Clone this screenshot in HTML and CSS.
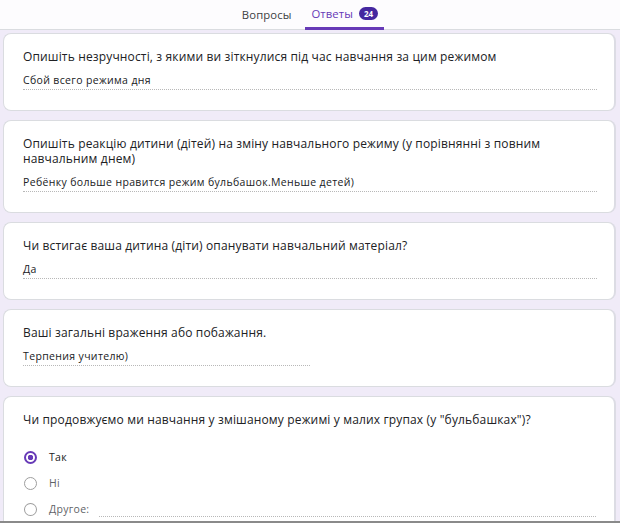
FILE: index.html
```html
<!DOCTYPE html>
<html lang="uk">
<head>
<meta charset="utf-8">
<link rel="stylesheet" href="styles.css">
</head>
<body>
<header class="tabs">
  <div class="tab">Вопросы</div>
  <div class="tab active">Ответы <span class="badge">24</span></div>
</header>
<main class="list">
  <section class="card">
    <div class="q">Опишіть незручності, з якими ви зіткнулися під час навчання за цим режимом</div>
    <div class="a full">Сбой всего режима дня</div>
  </section>
  <section class="card">
    <div class="q">Опишіть реакцію дитини (дітей) на зміну навчального режиму (у порівнянні з повним навчальним днем)</div>
    <div class="a full">Ребёнку больше нравится режим бульбашок.Меньше детей)</div>
  </section>
  <section class="card">
    <div class="q">Чи встигає ваша дитина (діти) опанувати навчальний матеріал?</div>
    <div class="a full">Да</div>
  </section>
  <section class="card">
    <div class="q">Ваші загальні враження або побажання.</div>
    <div class="a short">Терпения учителю)</div>
  </section>
  <section class="card last">
    <div class="q">Чи продовжуємо ми навчання у змішаному режимі у малих групах (у "бульбашках")?</div>
    <div class="options">
      <div class="opt"><span class="radio on"></span><span class="lbl dark">Так</span></div>
      <div class="opt"><span class="radio"></span><span class="lbl">Ні</span></div>
      <div class="opt"><span class="radio"></span><span class="lbl">Другое:</span><span class="other"></span></div>
    </div>
  </section>
</main>
</body>
</html>
```
FILE: styles.css
```css
html, body {
  margin: 0;
  padding: 0;
}
body {
  width: 620px;
  height: 523px;
  overflow: hidden;
  background: #f0ebf8;
  font-family: "Open Sans", "Noto Sans", sans-serif;
  color: #202124;
  box-sizing: border-box;
  border-bottom: 2px solid #8a8a8a;
}
.tabs {
  height: 30px;
  background: #fdfcfe;
  border-bottom: 1px solid #dadce0;
  box-sizing: border-box;
  display: flex;
  justify-content: center;
  gap: 12px;
  padding-left: 4px;
}
.tab {
  font-size: 11.3px;
  letter-spacing: 0.1px;
  color: #3c4043;
  line-height: 29px;
  padding: 0 2px;
  display: flex;
  align-items: center;
  gap: 6px;
}
.tab.active {
  color: #673ab7;
  border-bottom: 3px solid #673ab7;
  height: 27px;
  padding: 0 6px;
  margin-bottom: -1px;
}
.badge {
  display: inline-block;
  background: #4527a0;
  color: #fff;
  font-size: 8px;
  font-weight: 700;
  line-height: 13px;
  height: 13px;
  padding: 0 5px;
  border-radius: 7px;
  letter-spacing: 0;
}
.list {
  display: flex;
  flex-direction: column;
  gap: 9px;
  padding: 3px 4px 0 3px;
}
.card {
  background: #fff;
  border: 1px solid #dadce0;
  border-right: 2px solid #dcdce4;
  border-radius: 8px;
  padding: 15px 18px 20px 19px;
  min-height: 76px;
  box-sizing: border-box;
}
.q {
  font-size: 12px;
  letter-spacing: 0.15px;
  line-height: 15px;
  color: #202124;
  padding-right: 10px;
}
.a {
  font-size: 10.5px;
  letter-spacing: 0.35px;
  line-height: 14px;
  margin-top: 9px;
  padding-bottom: 2px;
  border-bottom: 1px dotted #b8b8b8;
  color: #202124;
}
.a.full { width: 574px; }
.a.short { width: 287px; }
.card.last {
  padding-top: 15px;
  padding-bottom: 0;
  height: 140px;
}
.options {
  margin-top: 22px;
  display: flex;
  flex-direction: column;
  gap: 10px;
}
.opt {
  display: flex;
  align-items: center;
  height: 16px;
}
.radio {
  width: 13px;
  height: 13px;
  border: 1.5px solid #9e9e9e;
  border-radius: 50%;
  box-sizing: border-box;
  margin-left: 1px;
  margin-right: 12px;
}
.radio.on {
  border-color: #673ab7;
  border-width: 2px;
  background: radial-gradient(circle, #673ab7 0 2.5px, #fff 3px);
}
.lbl {
  font-size: 10.5px;
  letter-spacing: 0.3px;
  color: #5f6368;
}
.lbl.dark { color: #202124; }
.other {
  margin-left: 10px;
  width: 500px;
  border-bottom: 1px dotted #b8b8b8;
  align-self: flex-end;
}
```
